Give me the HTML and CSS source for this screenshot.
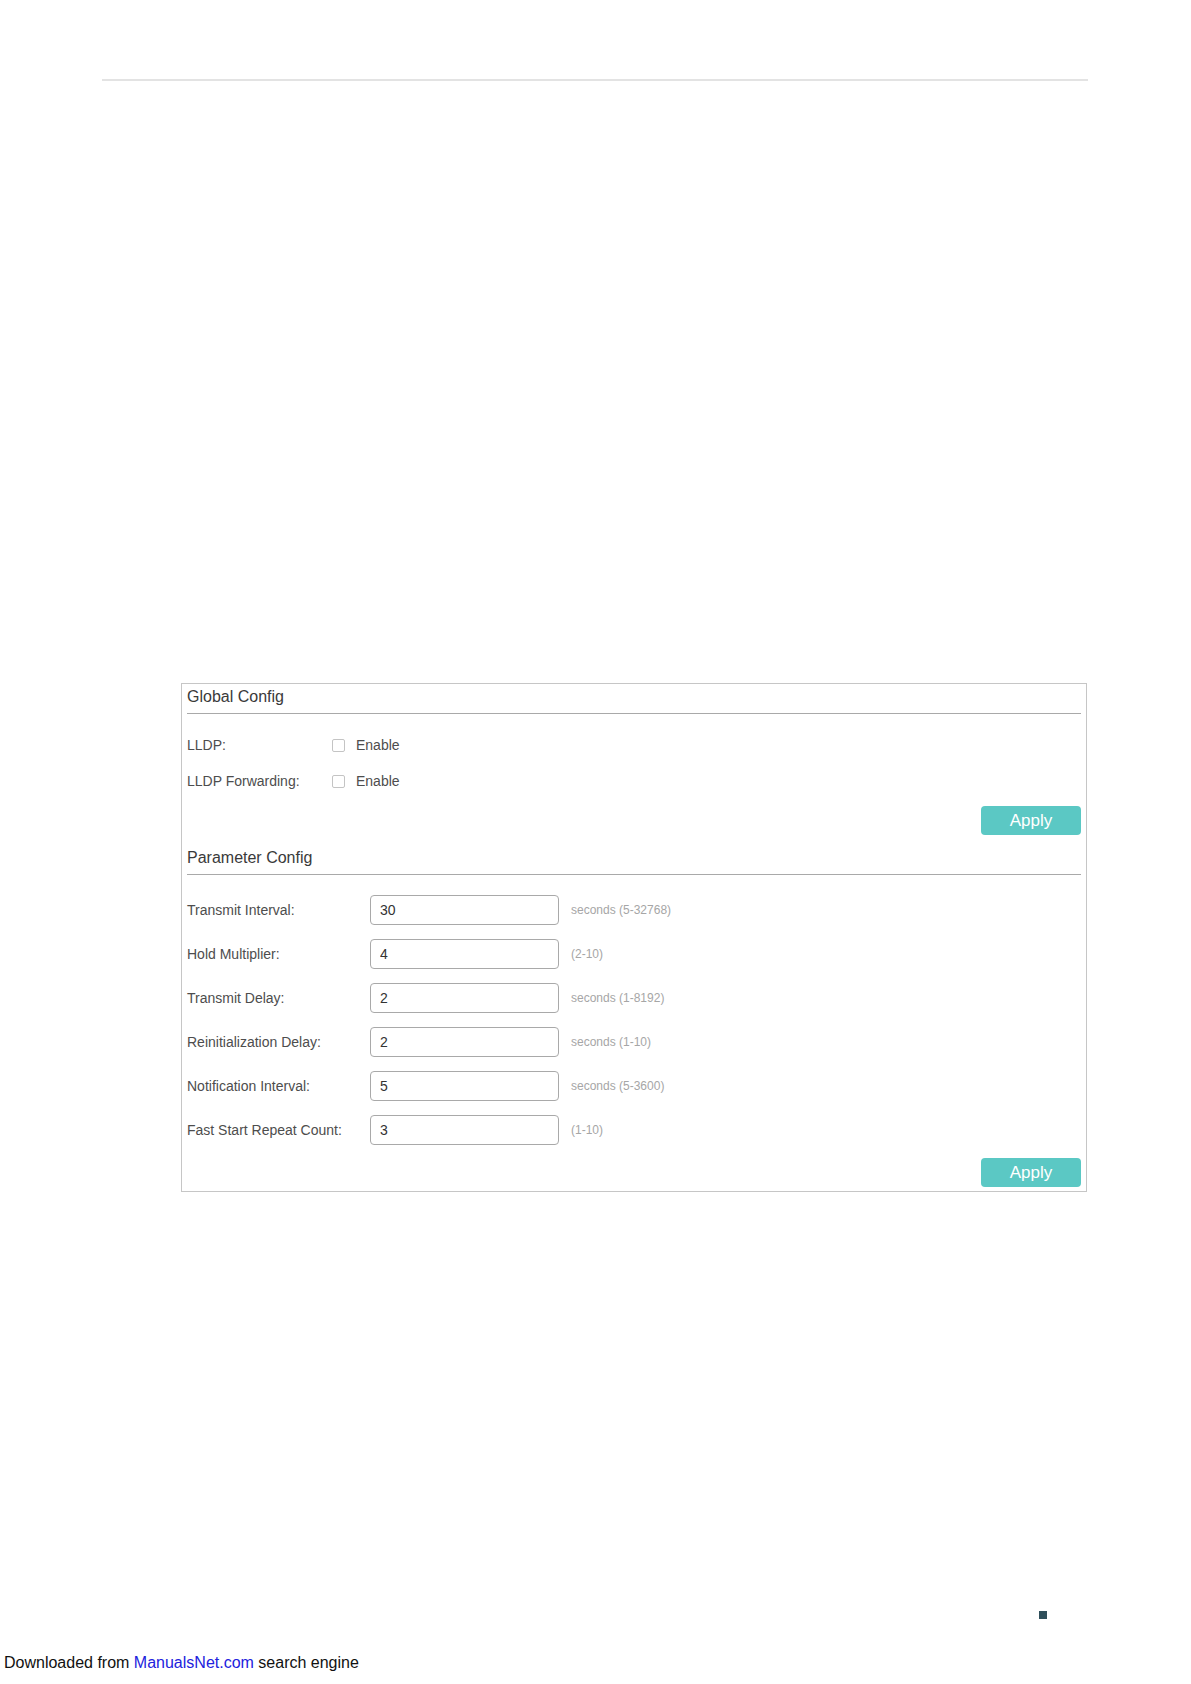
FILE: index.html
```html
<!DOCTYPE html>
<html lang="en">
<head>
  <meta charset="UTF-8" />
  <title>LLDP – Global Config</title>
  <link rel="stylesheet" href="styles.css">
</head>
<body>

  <div class="top-rule"></div>

  <div class="panel">
    <div class="section-title">Global Config</div>

    <div class="check-row">
      <label class="row-label" for="lldp">LLDP:</label>
      <input type="checkbox" id="lldp" class="check">
      <span class="check-text">Enable</span>
    </div>
    <div class="check-row">
      <label class="row-label" for="lldpFwd">LLDP Forwarding:</label>
      <input type="checkbox" id="lldpFwd" class="check">
      <span class="check-text">Enable</span>
    </div>

    <div class="actions">
      <button class="apply">Apply</button>
    </div>

    <div class="section-title">Parameter Config</div>

    <div class="params">
      <div class="param-row">
        <label class="param-label">Transmit Interval:</label>
        <input type="text" class="field" value="30">
        <span class="hint">seconds (5-32768)</span>
      </div>
      <div class="param-row">
        <label class="param-label">Hold Multiplier:</label>
        <input type="text" class="field" value="4">
        <span class="hint">(2-10)</span>
      </div>
      <div class="param-row">
        <label class="param-label">Transmit Delay:</label>
        <input type="text" class="field" value="2">
        <span class="hint">seconds (1-8192)</span>
      </div>
      <div class="param-row">
        <label class="param-label">Reinitialization Delay:</label>
        <input type="text" class="field" value="2">
        <span class="hint">seconds (1-10)</span>
      </div>
      <div class="param-row">
        <label class="param-label">Notification Interval:</label>
        <input type="text" class="field" value="5">
        <span class="hint">seconds (5-3600)</span>
      </div>
      <div class="param-row">
        <label class="param-label">Fast Start Repeat Count:</label>
        <input type="text" class="field" value="3">
        <span class="hint">(1-10)</span>
      </div>
    </div>

    <div class="actions last">
      <button class="apply">Apply</button>
    </div>
  </div>

  <div class="page-mark"></div>

  <div class="footer">
    Downloaded from <a href="#" class="footer-link">ManualsNet.com</a> search engine
  </div>

</body>
</html>
```

FILE: styles.css
```css
body {
  font-family: "Liberation Sans", Arial, sans-serif;
  background: white;
  margin: 0;
  color: #333;
}
.top-rule {
  margin: 79px 0 0 102px;
  width: 986px;
  height: 2px;
  background: #e3e3e3;
}
.panel {
  margin: 602px 0 0 181px;
  width: 906px;
  box-sizing: border-box;
  border: 1px solid #c6c6c6;
  padding: 0 5px 4px;
}
.section-title {
  font-size: 16px;
  line-height: 25px;
  padding-bottom: 4px;
  border-bottom: 1px solid #a9a9a9;
  color: #3a3a3a;
}
.check-row {
  display: flex;
  align-items: center;
  height: 24px;
  margin-top: 12px;
  font-size: 14px;
  color: #4d4d4d;
}
.section-title + .check-row {
  margin-top: 19px;
}
.row-label {
  width: 145px;
}
.check {
  appearance: none;
  width: 13px;
  height: 13px;
  margin: 0 11px 0 0;
  border: 1px solid #c4c4c4;
  border-radius: 2px;
  background: white;
  box-sizing: border-box;
}
.actions {
  display: flex;
  justify-content: flex-end;
  margin: 13px 0 10px;
}
.actions.last {
  margin-bottom: 0;
}
.apply {
  width: 100px;
  height: 29px;
  border: none;
  border-radius: 4px;
  background: #5bc8c4;
  color: white;
  font-family: "Liberation Sans", Arial, sans-serif;
  font-size: 17px;
  padding: 0;
}
.params {
  display: flex;
  flex-direction: column;
  gap: 14px;
  margin-top: 20px;
}
.param-row {
  display: flex;
  align-items: center;
  font-size: 14px;
  color: #4d4d4d;
}
.param-label {
  width: 183px;
}
.field {
  width: 189px;
  height: 30px;
  box-sizing: border-box;
  margin: 0;
  padding: 0 9px;
  border: 1px solid #a9a9a9;
  border-radius: 4px;
  font-family: "Liberation Sans", Arial, sans-serif;
  font-size: 14px;
  color: #333;
}
.hint {
  margin-left: 12px;
  font-size: 12px;
  color: #a6a6a6;
}
.page-mark {
  margin: 419px 0 0 1039px;
  width: 8px;
  height: 8px;
  background: #2f4f5b;
}
.footer {
  margin: 35px 0 0 4px;
  font-size: 16px;
  line-height: 18px;
  color: #111;
}
.footer-link {
  color: #2222dd;
  text-decoration: none;
}
```
